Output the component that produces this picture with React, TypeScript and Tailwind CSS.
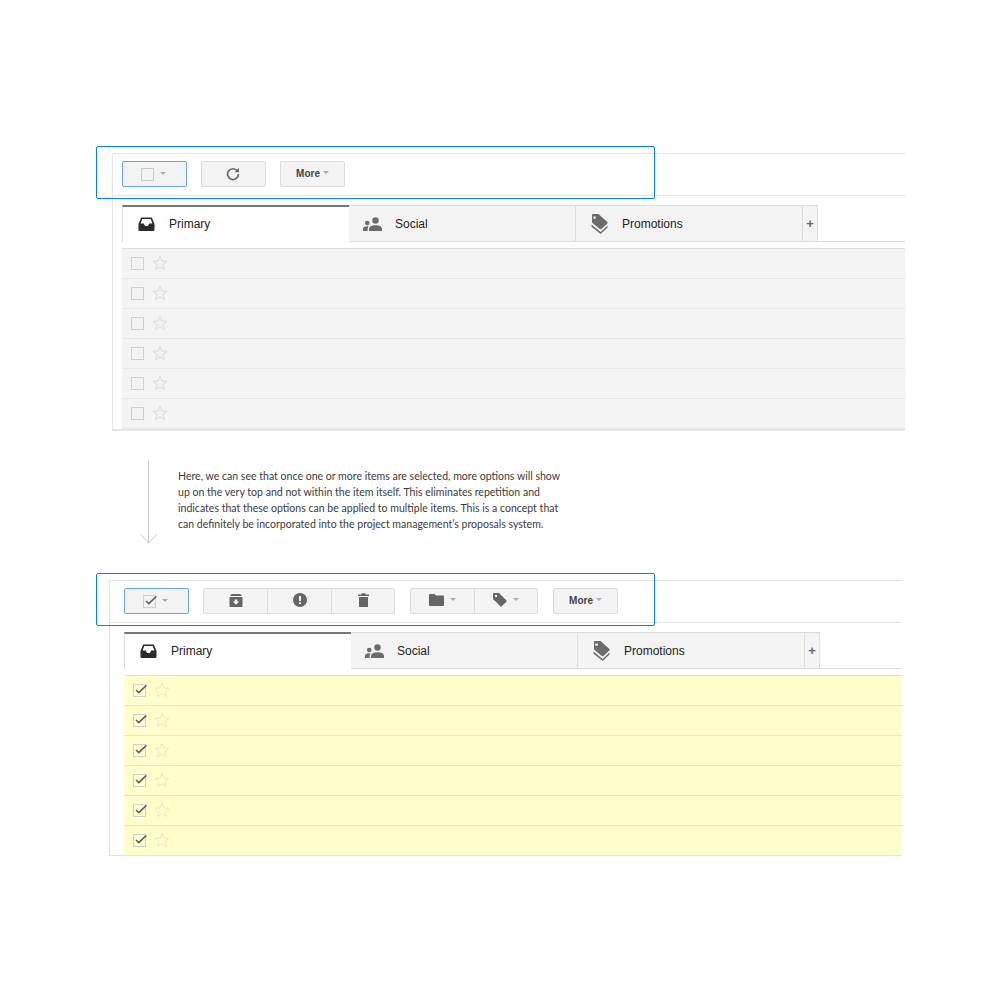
import React from 'react';

const arial = 'font-["Liberation_Sans",Arial,sans-serif]';

const Caret = ({ tight }: { tight?: boolean }) => (
  <span className={`${tight ? 'ml-[3px]' : 'ml-[6px]'} mb-[2px] h-0 w-0 border-x-[3.5px] border-t-[3px] border-x-transparent border-t-[#acacac]`} />
);

const Checkbox = ({ checked }: { checked?: boolean }) => (
  <span className="relative block h-[13px] w-[13px] border border-[#cfcfcf]">
    {checked && (
      <svg className="absolute left-[0px] top-[-3px]" width="14" height="14" viewBox="0 0 14 14">
        <path d="M2 8 L4.8 10.6 L12.4 3.4" fill="none" stroke="#5f5f5f" strokeWidth="1.5" />
      </svg>
    )}
  </span>
);

const Star = ({ stroke }: { stroke: string }) => (
  <svg width="16" height="16" viewBox="0 1 16 16">
    <path d="M8 1.2 L9.9 6 L15 6.3 L11 9.6 L12.4 14.6 L8 11.8 L3.6 14.6 L5 9.6 L1 6.3 L6.1 6 Z" fill="none" stroke={stroke} strokeWidth="1" />
  </svg>
);

const InboxIcon = () => (
  <svg width="17" height="16" viewBox="0 0 18 16">
    <path d="M3.4 1 H14.6 L17.5 8 V14 Q17.5 15.5 16 15.5 H2 Q.5 15.5 .5 14 V8 Z M4.6 2.6 L2.7 7.5 H6.2 L7.4 10 H10.6 L11.8 7.5 H15.3 L13.4 2.6 Z" fill="#2b2b2b" fillRule="evenodd" />
  </svg>
);

const PeopleIcon = () => (
  <svg width="19" height="14" viewBox="0 0 19 14">
    <circle cx="12.5" cy="3.5" r="3.2" fill="#6b6b6b" />
    <circle cx="4.2" cy="6" r="2.3" fill="#6b6b6b" />
    <path d="M6 14 V12 Q6 8.2 12.5 8.2 Q19 8.2 19 12 V14 Z" fill="#6b6b6b" />
    <path d="M0 14 V12 Q0 9.3 4.5 9.2 Q5 9.2 5.6 9.4 Q4.6 10.4 4.6 12 V14 Z" fill="#6b6b6b" />
  </svg>
);

const PromoIcon = () => (
  <svg width="17" height="20" viewBox="0 0 17 20">
    <path d="M1 1 Q1 0 2 0 H7.5 L16.4 8 Q17 8.6 16.4 9.4 L10.4 15 Q9.6 15.6 8.8 15 L1 8.5 Z M3.6 2.2 A1.4 1.4 0 1 0 3.61 2.2 Z" fill="#6b6b6b" fillRule="evenodd" />
    <path d="M.5 10.6 L9.6 18 L16.5 11.6 V13.6 L9.6 20 L.5 12.8 Z" fill="#6b6b6b" />
  </svg>
);

const ArchiveIcon = () => (
  <svg width="14" height="13" viewBox="0 0 14 13">
    <path d="M2.6 0 H11.4 L13 2 H1 Z M.5 3 H13.5 V12 Q13.5 13 12.5 13 H1.5 Q.5 13 .5 12 Z M5.7 5.4 V7.5 H3.8 L7 10.8 L10.2 7.5 H8.3 V5.4 Z" fill="#666" fillRule="evenodd" />
  </svg>
);

const SpamIcon = () => (
  <svg width="14" height="14" viewBox="0 0 14 14">
    <path d="M7 0 A7 7 0 1 0 7.01 0 Z M6 3 H8 V8 H6 Z M6 9.2 H8 V11 H6 Z" fill="#666" fillRule="evenodd" />
  </svg>
);

const TrashIcon = () => (
  <svg width="11" height="14" viewBox="0 0 11 14">
    <path d="M0 1.5 H3.5 V.3 H7.5 V1.5 H11 V3 H0 Z M1 4 H10 V14 H1 Z" fill="#666" />
  </svg>
);

const FolderIcon = () => (
  <svg width="15" height="12" viewBox="0 0 15 12">
    <path d="M0 1 Q0 0 1 0 H5.5 L7 1.6 H14 Q15 1.6 15 2.6 V11 Q15 12 14 12 H1 Q0 12 0 11 Z" fill="#666" />
  </svg>
);

const TagIcon = () => (
  <svg width="14" height="14" viewBox="0 0 14 14">
    <path d="M0 1 Q0 0 1 0 H6 L13.6 7.6 Q14 8 13.6 8.5 L8.5 13.6 Q8 14 7.6 13.6 L0 6 Z M3 1.8 A1.2 1.2 0 1 0 3.01 1.8 Z" fill="#666" fillRule="evenodd" />
  </svg>
);

const RefreshIcon = () => (
  <svg width="14" height="14" viewBox="0 0 14 14">
    <path d="M11.4 4 A5.4 5.4 0 1 0 12.4 7" fill="none" stroke="#666" strokeWidth="1.7" />
    <path d="M13 .8 V5.2 H8.6 Z" fill="#666" />
  </svg>
);

const btn = 'flex h-[26px] w-[65px] items-center justify-center rounded-[2px] border border-[#dcdcdc] bg-[#f3f3f3]';
const segment = 'flex h-full w-[64px] shrink-0 items-center justify-center border-r border-[#dcdcdc] pb-[2px] last:w-auto last:flex-1 last:border-r-0';
const group = 'flex h-[26px] rounded-[2px] border border-[#dcdcdc] bg-[#f3f3f3]';

const MoreButton = () => (
  <div className={`${btn} pb-[1px]`}>
    <span className={`${arial} text-[10px] font-bold text-[#444]`}>More</span>
    <Caret tight />
  </div>
);

const Tabs = ({ indent }: { indent: string }) => {
  const tab = 'flex h-[37px] w-[227px] items-center border border-l-0 border-[#dcdcdc] bg-[#f3f3f3]';
  return (
    <div className={`flex ${indent} ${arial} text-[12px] text-[#222]`}>
      <div className="flex h-[37px] w-[227px] items-center border-l border-t-[2px] border-[#dcdcdc] border-t-[#777] bg-white pb-[2px] pl-[15px]">
        <InboxIcon />
        <span className="ml-[14px]">Primary</span>
      </div>
      <div className={`${tab} pl-[14px]`}>
        <PeopleIcon />
        <span className="ml-[13px]">Social</span>
      </div>
      <div className={`${tab} pl-[15px]`}>
        <PromoIcon />
        <span className="ml-[14px]">Promotions</span>
      </div>
      <div className="flex h-[37px] w-[15px] items-center justify-center border border-l-0 border-[#dcdcdc] bg-[#f3f3f3] text-[13px] font-bold leading-none text-[#666]">+</div>
      <div className="h-[37px] flex-1 border-b border-[#dcdcdc]" />
    </div>
  );
};

const Rows = ({ indent, selected }: { indent: string; selected?: boolean }) => (
  <div className={`${indent} border-t border-[#dedede]`}>
    {[0, 1, 2, 3, 4, 5].map((i) => (
      <div
        key={i}
        className={`flex h-[30px] items-center gap-[8px] border-b pl-[9px] ${
          selected ? 'border-[#e6e6c8] bg-[#ffffcc]' : 'border-[#e6e6e6] bg-[#f3f3f3]'
        }`}
      >
        <Checkbox checked={selected} />
        <Star stroke={selected ? '#e8e8c6' : '#dadada'} />
      </div>
    ))}
  </div>
);

export default function App() {
  return (
    <div className="h-[1000px] bg-white pt-[153px]">
      {/* Before selecting */}
      <section className="relative ml-[112px] h-[278px] w-[793px] border-l border-t border-b-2 border-[#e6e6e6]">
        <div className="flex h-[42px] items-center gap-[14px] border-b border-[#e6e6e6] pb-[1px] pl-[9px]">
          <div className={`${btn} !border-[#6fa3ee] pr-[2px]`}>
            <span className="block h-[13px] w-[13px] border border-[#c8c8c8]" />
            <Caret />
          </div>
          <div className={`${btn} pr-[1px]`}>
            <RefreshIcon />
          </div>
          <MoreButton />
        </div>
        <div className="mt-[9px]">
          <Tabs indent="ml-[9px]" />
        </div>
        <div className="mt-[6px]">
          <Rows indent="ml-[9px]" />
        </div>
        <div className="absolute left-[-17px] top-[-8px] h-[53px] w-[559px] rounded-[2px] border border-[#0a7cff]" />
      </section>

      {/* Note */}
      <div className="mt-[29px] flex h-[84px]">
        <div className="ml-[140px] w-[18px]">
          <svg width="18" height="84" viewBox="0 0 18 84">
            <path d="M8.5 0 V83 M.5 74.5 L8.5 83 L16.5 74.5" fill="none" stroke="#c9c9c9" strokeWidth="1" />
          </svg>
        </div>
        <p className="ml-[20px] mt-[8px] w-[400px] font-['Lato',sans-serif] text-[10.55px] leading-[16px] text-[#3a3a3a]">
          Here, we can see that once one or more items are selected, more options will show<br />
          up on the very top and not within the item itself. This eliminates repetition and<br />
          indicates that these options can be applied to multiple items. This is a concept that<br />
          can definitely be incorporated into the project management’s proposals system.
        </p>
      </div>

      {/* After selecting */}
      <section className="relative ml-[109px] mt-[36px] h-[276px] w-[793px] border-l border-t border-b border-[#e2e2e2]">
        <div className="flex h-[42px] items-center border-b border-[#e6e6e6] pb-[1px] pl-[14px]">
          <div className={`${btn} !border-[#6fa3ee] pr-[2px]`}>
            <Checkbox checked />
            <Caret />
          </div>
          <div className={`${group} ml-[14px] w-[192px]`}>
            <div className={segment}><ArchiveIcon /></div>
            <div className={segment}><SpamIcon /></div>
            <div className={segment}><TrashIcon /></div>
          </div>
          <div className={`${group} ml-[15px] w-[128px]`}>
            <div className={segment}><FolderIcon /><Caret /></div>
            <div className={segment}><TagIcon /><Caret /></div>
          </div>
          <div className="ml-[15px]">
            <MoreButton />
          </div>
        </div>
        <div className="mt-[9px]">
          <Tabs indent="ml-[14px]" />
        </div>
        <div className="mt-[6px]">
          <Rows indent="ml-[14px]" selected />
        </div>
        <div className="absolute left-[-14px] top-[-8px] h-[53px] w-[559px] rounded-[2px] border border-[#0a7cff]" />
      </section>
    </div>
  );
}
